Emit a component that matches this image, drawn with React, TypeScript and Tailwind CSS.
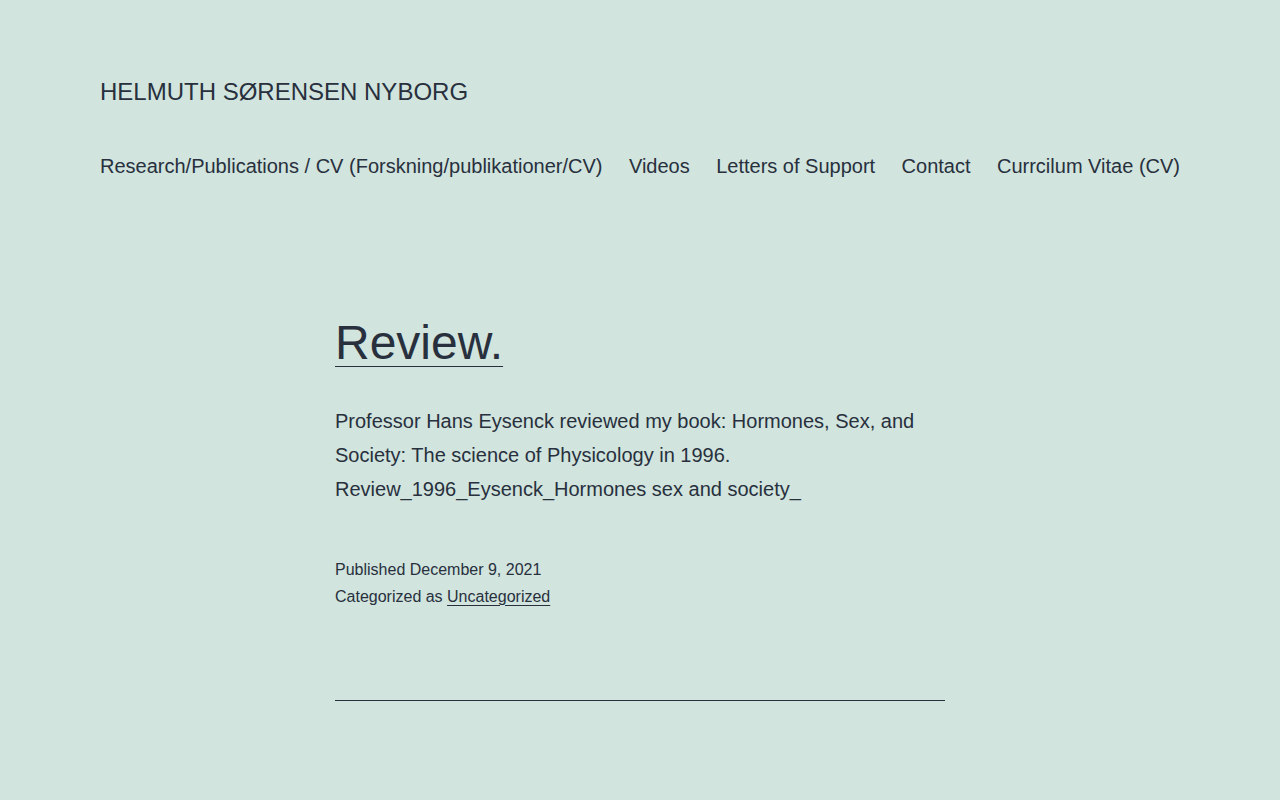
export default function App() {
  const nav = [
    "Research/Publications / CV (Forskning/publikationer/CV)",
    "Videos",
    "Letters of Support",
    "Contact",
    "Currcilum Vitae (CV)",
  ];
  return (
    <div
      className="min-h-[800px] w-full bg-[#d1e4dd] text-[#28303d]"
      style={{ fontFamily: '"Liberation Sans", Arial, sans-serif' }}
    >
      <header className="mx-[100px] pt-[76px]">
        <p className="text-[24px] leading-[31.2px] uppercase">HELMUTH SØRENSEN NYBORG</p>
        <nav className="mt-[44px] flex justify-between text-[20px] leading-[30px]">
          {nav.map((n) => (
            <a key={n} className="block">
              {n}
            </a>
          ))}
        </nav>
      </header>
      <main className="mx-auto w-[610px] pt-[131px]">
        <h1 className="text-[48px] leading-[62.4px]">
          <a className="underline decoration-1 underline-offset-[7px]">Review.</a>
        </h1>
        <div className="mt-[29px] text-[20px] leading-[34px]">
          <p>Professor Hans Eysenck reviewed my book: Hormones, Sex, and Society: The science of Physicology in 1996.</p>
          <p>Review_1996_Eysenck_Hormones sex and society_</p>
        </div>
        <div className="mt-[50px] text-[16px] leading-[27px]">
          <p>Published December 9, 2021</p>
          <p>
            Categorized as <a className="underline decoration-1 underline-offset-[3px]">Uncategorized</a>
          </p>
        </div>
        <div className="mt-[90px] h-px w-full bg-[#28303d]" />
      </main>
    </div>
  );
}
